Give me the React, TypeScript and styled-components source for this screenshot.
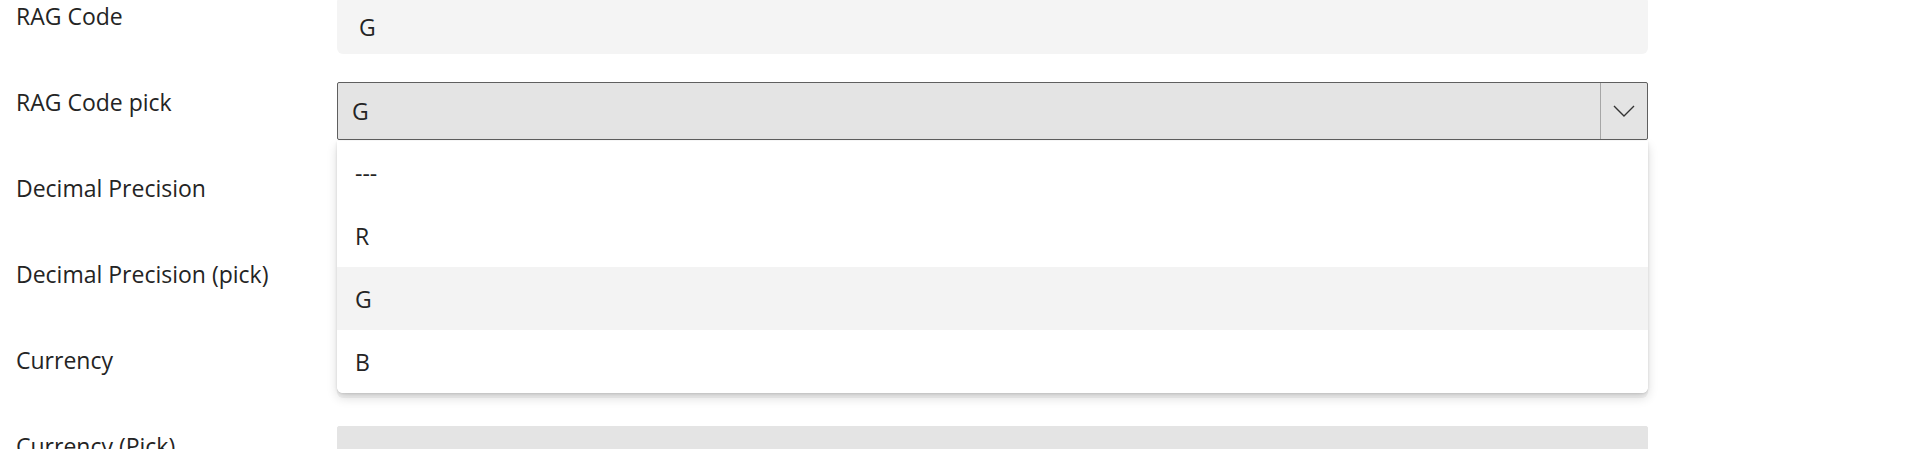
import React from 'react';
import styled, { createGlobalStyle } from 'styled-components';

const GlobalStyle = createGlobalStyle`
  body {
    margin: 0;
    background: #ffffff;
    font-family: 'Open Sans', 'Noto Sans', sans-serif;
    color: #242424;
    overflow: hidden;
  }
`;

const Form = styled.div`
  display: grid;
  grid-template-columns: 321px 1311px;
  grid-auto-rows: 58px;
  row-gap: 28px;
  padding-left: 16px;
  margin-top: -4px;
`;

const Label = styled.div`
  font-size: 23px;
  line-height: 28px;
  padding-top: 6px;
  color: #242424;
`;

const ReadOnlyField = styled.div`
  display: flex;
  align-items: center;
  height: 58px;
  padding-left: 22px;
  padding-top: 4px;
  box-sizing: border-box;
  background: #f4f4f4;
  border-radius: 6px;
  font-size: 23px;
`;

const SelectWrap = styled.div`
  position: relative;
`;

const SelectBox = styled.div<{ $open?: boolean }>`
  display: flex;
  height: 58px;
  box-sizing: border-box;
  background: #e4e4e4;
  border: 1px solid ${({ $open }) => ($open ? '#5f5f5f' : '#e4e4e4')};
  border-radius: 2px;
  font-size: 23px;
`;

const SelectValue = styled.div`
  flex: 1;
  display: flex;
  align-items: center;
  padding-left: 14px;
`;

const ChevronButton = styled.div`
  width: 46px;
  display: flex;
  align-items: center;
  justify-content: center;
  border-left: 1px solid #a6a6a6;
`;

const Menu = styled.div`
  position: absolute;
  top: calc(100% + 1px);
  left: 0;
  right: 0;
  z-index: 10;
  background: #ffffff;
  border-radius: 0 0 6px 6px;
  overflow: hidden;
  box-shadow: 0 5px 11px rgba(0, 0, 0, 0.14), 0 1px 3px rgba(0, 0, 0, 0.12);
`;

const Option = styled.div<{ $hover?: boolean }>`
  display: flex;
  align-items: center;
  height: 63px;
  padding-left: 18px;
  font-size: 23px;
  background: ${({ $hover }) => ($hover ? '#f3f3f3' : '#ffffff')};
  color: #242424;
`;

const Chevron = () => (
  <svg width="22" height="12" viewBox="0 0 22 12" fill="none">
    <polyline points="1,1 11,11 21,1" stroke="#333333" strokeWidth="1.4" />
  </svg>
);

const options = ['---', 'R', 'G', 'B'];

const App = () => (
  <>
    <GlobalStyle />
    <Form>
      <Label>RAG Code</Label>
      <ReadOnlyField>G</ReadOnlyField>

      <Label>RAG Code pick</Label>
      <SelectWrap>
        <SelectBox $open>
          <SelectValue>G</SelectValue>
          <ChevronButton>
            <Chevron />
          </ChevronButton>
        </SelectBox>
        <Menu>
          {options.map((o) => (
            <Option key={o} $hover={o === 'G'}>
              {o}
            </Option>
          ))}
        </Menu>
      </SelectWrap>

      <Label>Decimal Precision</Label>
      <ReadOnlyField />

      <Label>Decimal Precision (pick)</Label>
      <SelectWrap>
        <SelectBox />
      </SelectWrap>

      <Label>Currency</Label>
      <ReadOnlyField />

      <Label>Currency (Pick)</Label>
      <SelectWrap>
        <SelectBox />
      </SelectWrap>
    </Form>
  </>
);

export default App;
